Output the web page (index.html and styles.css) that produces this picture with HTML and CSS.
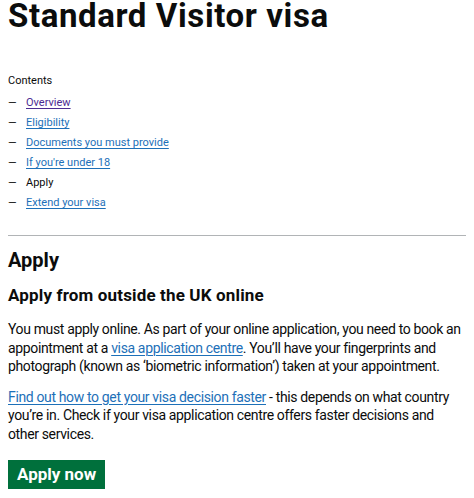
FILE: index.html
```html
<!DOCTYPE html>
<html lang="en">
<head>
    <meta charset="UTF-8">
    <meta name="viewport" content="width=device-width, initial-scale=1.0">
    <title>Standard Visitor visa</title>
    <link rel="stylesheet" href="styles.css">
</head>
<body>
    <main class="page">
        <h1 class="title">Standard Visitor visa</h1>

        <nav class="contents">
            <h2 class="contents-title">Contents</h2>
            <ol class="contents-list">
                <li><a href="#" class="visited">Overview</a></li>
                <li><a href="#">Eligibility</a></li>
                <li><a href="#">Documents you must provide</a></li>
                <li><a href="#">If you're under 18</a></li>
                <li class="current">Apply</li>
                <li><a href="#">Extend your visa</a></li>
            </ol>
        </nav>

        <section class="part">
            <h2 class="part-title">Apply</h2>
            <h3 class="sub-title">Apply from outside the UK online</h3>
            <p>You must apply online. As part of your online application, you need to book an appointment at a <a href="#">visa application centre</a>. You’ll have your fingerprints and photograph (known as ‘biometric information’) taken at your appointment.</p>
            <p><a href="#">Find out how to get your visa decision faster</a> - this depends on what country you’re in. Check if your visa application centre offers faster decisions and other&nbsp;services.</p>
            <a href="#" class="btn">Apply now</a>
        </section>
    </main>
</body>
</html>
```

FILE: styles.css
```css
* {
    margin: 0;
    padding: 0;
    box-sizing: border-box;
}

body {
    font-family: Roboto, 'Liberation Sans', Arial, sans-serif;
    color: #0b0c0c;
    background: #ffffff;
}

.page {
    padding: 0 8px;
}

.title {
    font-size: 33px;
    line-height: 32px;
    font-weight: 700;
    letter-spacing: 0.6px;
}

.contents {
    margin-top: 39px;
}

.contents-title {
    font-size: 11px;
    line-height: 20px;
    font-weight: 400;
    margin-bottom: 2px;
}

.contents-list {
    list-style: none;
    font-size: 11px;
    line-height: 20px;
}

.contents-list li {
    display: flex;
}

.contents-list li::before {
    content: "—";
    width: 18px;
    flex-shrink: 0;
}

a {
    color: #1d70b8;
    text-decoration: underline;
    text-decoration-thickness: 1px;
    text-underline-offset: 2px;
}

a.visited {
    color: #4c2c92;
}

.part {
    margin-top: 22px;
    border-top: 1px solid #b1b4b6;
    padding-top: 12px;
}

.part-title {
    font-size: 20px;
    line-height: 24px;
    font-weight: 700;
    margin-bottom: 12px;
}

.sub-title {
    font-size: 17px;
    line-height: 22px;
    font-weight: 700;
    letter-spacing: 0.15px;
    margin-bottom: 14px;
}

.part p {
    font-size: 14px;
    line-height: 18.5px;
    letter-spacing: -0.36px;
    margin-bottom: 12px;
}

.btn {
    display: block;
    width: max-content;
    background: #00703c;
    color: #ffffff;
    text-decoration: none;
    font-size: 17px;
    line-height: 20px;
    font-weight: 700;
    padding: 4px 9px 5px;
    box-shadow: 0 2px 0 #002d18;
    margin-top: 17px;
}
```
